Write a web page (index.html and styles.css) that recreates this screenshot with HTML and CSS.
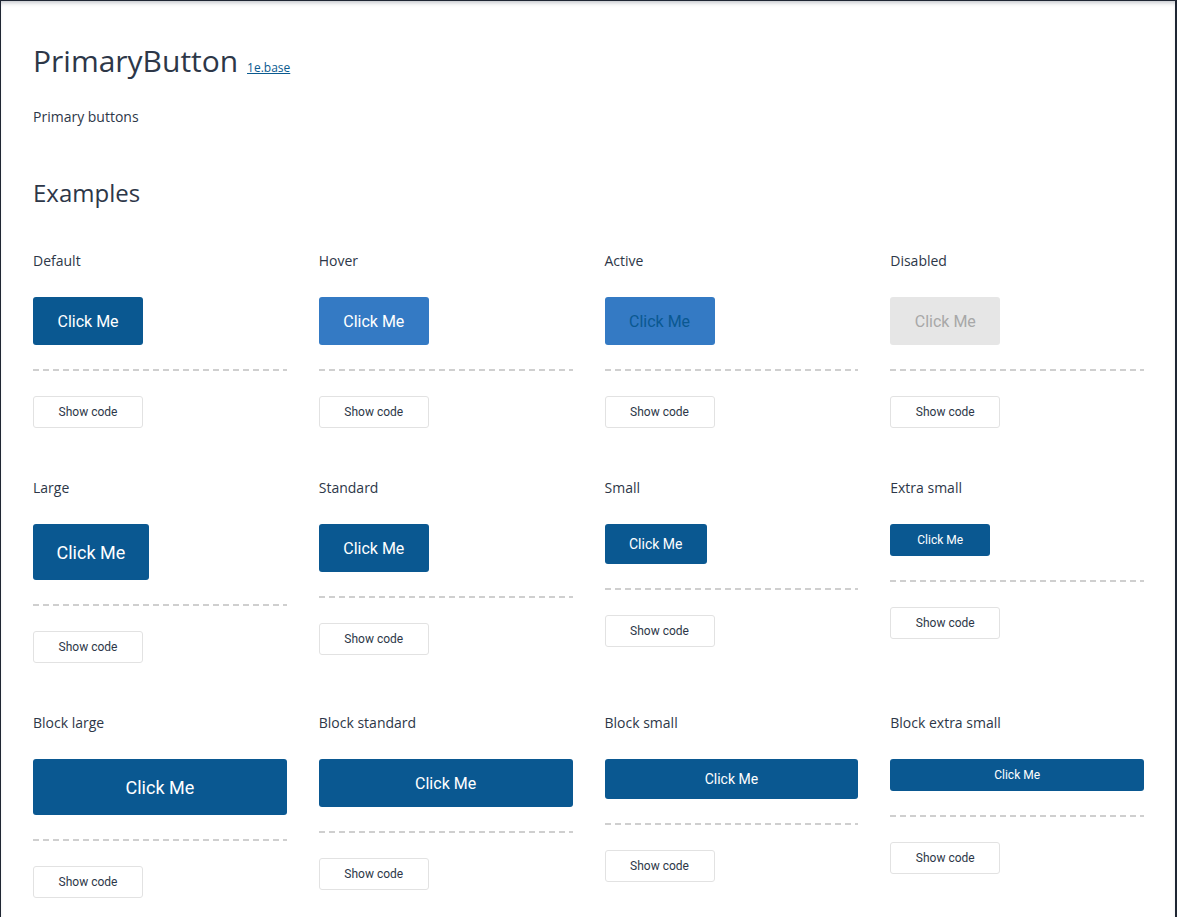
FILE: index.html
```html
<!DOCTYPE html>
<html lang="en">
<head>
<meta charset="utf-8">
<title>PrimaryButton</title>
<link rel="stylesheet" href="styles.css">
</head>
<body>
<div class="page">
  <h1 class="title">PrimaryButton <a class="src" href="#">1e.base</a></h1>
  <p class="desc">Primary buttons</p>
  <h2 class="section">Examples</h2>
  <div class="grid">
    <div class="cell">
      <div class="label">Default</div>
      <div class="demo"><button class="btn std">Click Me</button></div>
      <div class="dash"></div>
      <button class="code">Show code</button>
    </div>
    <div class="cell">
      <div class="label">Hover</div>
      <div class="demo"><button class="btn std hover">Click Me</button></div>
      <div class="dash"></div>
      <button class="code">Show code</button>
    </div>
    <div class="cell">
      <div class="label">Active</div>
      <div class="demo"><button class="btn std active">Click Me</button></div>
      <div class="dash"></div>
      <button class="code">Show code</button>
    </div>
    <div class="cell">
      <div class="label">Disabled</div>
      <div class="demo"><button class="btn std disabled">Click Me</button></div>
      <div class="dash"></div>
      <button class="code">Show code</button>
    </div>

    <div class="cell">
      <div class="label">Large</div>
      <div class="demo"><button class="btn lg">Click Me</button></div>
      <div class="dash"></div>
      <button class="code">Show code</button>
    </div>
    <div class="cell">
      <div class="label">Standard</div>
      <div class="demo"><button class="btn std">Click Me</button></div>
      <div class="dash"></div>
      <button class="code">Show code</button>
    </div>
    <div class="cell">
      <div class="label">Small</div>
      <div class="demo"><button class="btn sm">Click Me</button></div>
      <div class="dash"></div>
      <button class="code">Show code</button>
    </div>
    <div class="cell">
      <div class="label">Extra small</div>
      <div class="demo"><button class="btn xs">Click Me</button></div>
      <div class="dash"></div>
      <button class="code">Show code</button>
    </div>

    <div class="cell">
      <div class="label">Block large</div>
      <div class="demo"><button class="btn lg block">Click Me</button></div>
      <div class="dash"></div>
      <button class="code">Show code</button>
    </div>
    <div class="cell">
      <div class="label">Block standard</div>
      <div class="demo"><button class="btn std block">Click Me</button></div>
      <div class="dash"></div>
      <button class="code">Show code</button>
    </div>
    <div class="cell">
      <div class="label">Block small</div>
      <div class="demo"><button class="btn sm block">Click Me</button></div>
      <div class="dash"></div>
      <button class="code">Show code</button>
    </div>
    <div class="cell">
      <div class="label">Block extra small</div>
      <div class="demo"><button class="btn xs block">Click Me</button></div>
      <div class="dash"></div>
      <button class="code">Show code</button>
    </div>
  </div>
</div>
</body>
</html>
```
FILE: styles.css
```css
html, body {
  margin: 0;
  padding: 0;
}
body {
  background: #1f2633;
  font-family: "Open Sans", "Liberation Sans", sans-serif;
  color: #2d3748;
}
.page {
  background: #fff;
  margin: 1px 2px 0 1px;
  min-height: calc(100vh - 1px);
  box-sizing: border-box;
  padding: 40px 31px 40px 32px;
  box-shadow: inset 0 4px 5px -3px rgba(30, 40, 60, 0.35);
}
.title {
  margin: 0;
  font-size: 30px;
  line-height: 40px;
  font-weight: 400;
  color: #2d3748;
}
.src {
  font-size: 12px;
  color: #0a5a8f;
  text-decoration: underline;
  vertical-align: baseline;
  margin-left: 1px;
}
.desc {
  margin: 19px 0 0;
  font-size: 14px;
  line-height: 20px;
  color: #2d3748;
}
.section {
  margin: 50px 0 0;
  font-size: 24px;
  line-height: 32px;
  font-weight: 400;
  color: #2d3748;
}
.grid {
  margin-top: 42px;
  display: grid;
  grid-template-columns: repeat(4, 1fr);
  column-gap: 32px;
  row-gap: 50px;
  align-items: start;
}
.cell {
  display: flex;
  flex-direction: column;
  align-items: flex-start;
}
.label {
  font-size: 14px;
  line-height: 20px;
  color: #2d3748;
}
.demo {
  margin-top: 26px;
  width: 100%;
  display: flex;
}
.btn {
  font-family: Roboto, "Liberation Sans", sans-serif;
  border: none;
  border-radius: 3px;
  background: #0a5891;
  color: #fff;
  cursor: pointer;
  font-weight: 400;
}
.btn.lg { height: 56px; font-size: 18px; padding: 0 23.5px; }
.btn.std { height: 48px; font-size: 16px; padding: 0 24.5px; }
.btn.sm { height: 40px; font-size: 14px; padding: 0 24.5px; }
.btn.xs { height: 32px; font-size: 12px; padding: 0 27px; }
.btn.block { width: 100%; }
.btn.hover { background: #347ac4; }
.btn.active { background: #347ac4; color: #0a5891; }
.btn.disabled { background: #e6e6e6; color: #a8a8a8; }
.dash {
  margin-top: 24px;
  width: 100%;
  height: 2px;
  background: repeating-linear-gradient(to right, #cfcfcf 0 6px, transparent 6px 10px);
}
.code {
  margin-top: 25px;
  width: 110px;
  height: 32px;
  box-sizing: border-box;
  background: #fff;
  border: 1px solid #e2e2e2;
  border-radius: 3px;
  font-family: Roboto, "Liberation Sans", sans-serif;
  font-size: 12px;
  color: #2d3748;
  padding: 0;
  cursor: pointer;
}
```
